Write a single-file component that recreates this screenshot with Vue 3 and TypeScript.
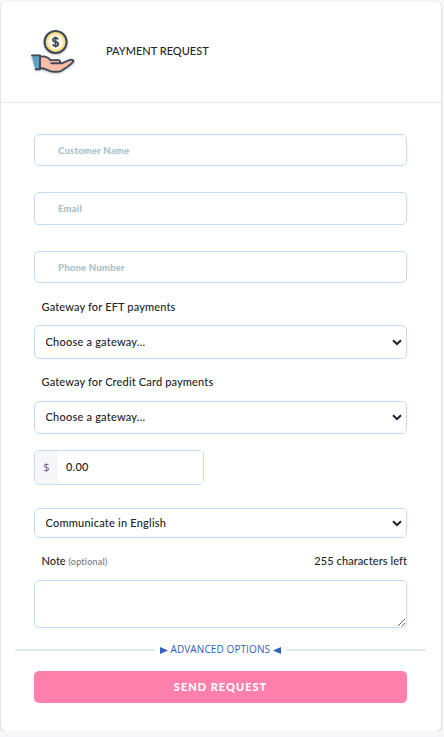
<script setup lang="ts">
import { computed, ref } from 'vue'

const NOTE_LIMIT = 255

const customer = ref('')
const email = ref('')
const phone = ref('')
const eftGateway = ref('')
const cardGateway = ref('')
const amount = ref('0.00')
const language = ref('en')
const note = ref('')

const charactersLeft = computed<number>(() => NOTE_LIMIT - note.value.length)
</script>

<template>
  <main class="card">
    <header class="head">
      <svg class="logo" viewBox="0 0 50 50" width="50" height="50" fill="none">
        <circle cx="27.6" cy="15" r="11" fill="#fbe08a" stroke="#3f4a59" stroke-width="2.1" />
        <circle cx="27.6" cy="15" r="7.5" fill="#fff8e6" />
        <path d="M30.2 12.4c-.4-1-1.4-1.5-2.6-1.5-1.5 0-2.6.7-2.6 2 0 2.8 5.3 1.3 5.3 4.1 0 1.3-1.2 2.1-2.7 2.1-1.4 0-2.5-.6-2.8-1.8M27.6 9.6v10.8" stroke="#3f4a59" stroke-width="1.7" />
        <path d="M4 28.6H12v13.6H7.8C5.7 38.5 4.6 33 4 28.6z" fill="#5f9fc4" />
        <path d="M12 29.8c4-1.2 7.5 0 10.5 3.3h8c1.8 0 2.5 2.8.3 3.2h3l7.5-3.1c2.7-1 5.2.2 3.8 1.7-2.9 3.1-7.6 6.4-12.1 9.1-2.5 1.2-8.5 1-11.5-.2-3-1.2-6-2.8-9.5-2.8z" fill="#f9bda8" />
        <path d="M4 28.4h8v13.8H7.7M12 29.8c4-1.2 7.5 0 10.5 3.3h8c1.8 0 2.5 3.2.3 3.2h-7.5M30.8 36.3h3l7.5-3.1c2.7-1 5.2.2 3.8 1.7-2.9 3.1-7.6 6.4-12.1 9.1-2.5 1.2-8.5 1-11.5-.2-3-1.2-6-2.8-9.5-2.8" stroke="#3f4a59" stroke-width="1.9" stroke-linejoin="round" stroke-linecap="round" />
      </svg>
      <h1 class="title">PAYMENT REQUEST</h1>
    </header>

    <form class="form" @submit.prevent>
      <input v-model="customer" class="control text customer" placeholder="Customer Name" />
      <input v-model="email" class="control text email" placeholder="Email" />
      <input v-model="phone" class="control text phone" placeholder="Phone Number" />

      <label class="label" for="eft">Gateway for EFT payments</label>
      <select id="eft" v-model="eftGateway" class="control select eft">
        <option value="">Choose a gateway...</option>
      </select>

      <label class="label second" for="credit">Gateway for Credit Card payments</label>
      <select id="credit" v-model="cardGateway" class="control select credit">
        <option value="">Choose a gateway...</option>
      </select>

      <div class="control amount">
        <span class="currency">$</span>
        <input v-model="amount" class="amount-input" />
      </div>

      <select v-model="language" class="control select language">
        <option value="en">Communicate in English</option>
      </select>

      <div class="note-row">
        <label for="note">Note <small class="optional">(optional)</small></label>
        <span class="counter">{{ charactersLeft }} characters left</span>
      </div>
      <textarea id="note" v-model="note" class="control note" :maxlength="NOTE_LIMIT"></textarea>
    </form>

    <div class="advanced">
      <span class="rule"></span>
      <a class="advanced-link">
        <svg width="8" height="7" viewBox="0 0 8 7"><path d="M0 0l8 3.5-8 3.5z" fill="currentColor" /></svg>
        <span class="advanced-text">ADVANCED OPTIONS</span>
        <svg width="8" height="7" viewBox="0 0 8 7"><path d="M8 0L0 3.5l8 3.5z" fill="currentColor" /></svg>
      </a>
      <span class="rule"></span>
    </div>

    <button class="send" type="button">SEND REQUEST</button>
  </main>
</template>

<style>
body {
  background: #f7f7f9;
}
</style>

<style scoped>
* {
  box-sizing: border-box;
}

.card {
  width: 440px;
  height: 729px;
  margin: 2px 0 0 1px;
  display: flow-root;
  background: #fff;
  border-radius: 5px;
  box-shadow: 0 1px 3px rgba(0, 0, 0, 0.2);
  font: 500 11px/16px Lato, 'Liberation Sans', sans-serif;
  color: #212529;
}

.head {
  height: 101px;
  display: flex;
  align-items: center;
  gap: 28px;
  padding-left: 27px;
  border-bottom: 1px solid #e9e9eb;
}

.logo {
  filter: drop-shadow(0 1px 1px rgba(0, 0, 0, 0.25));
}

.title {
  margin: 0 0 2px;
  font-size: 11px;
  font-weight: 500;
  line-height: 16px;
}

.form {
  display: flex;
  flex-direction: column;
  padding: 31px 34px 0 33px;
}

.control {
  display: block;
  width: 100%;
  margin: 0;
  border: 1px solid #c3dbf8;
  border-radius: 5px;
  background: #fff;
  font: inherit;
  color: inherit;
  outline: none;
}

.text {
  height: 32px;
  padding: 0 23px 2px;
}

.text::placeholder {
  color: #a9bfcc;
  font-size: 9.5px;
  font-weight: 900;
  letter-spacing: 0.2px;
  opacity: 1;
}

.email {
  height: 33px;
  margin-top: 26px;
}

.phone {
  margin-top: 26px;
}

.label {
  margin: 16px 0 10px 7.5px;
  letter-spacing: 0.15px;
}

.second {
  margin-top: 15px;
}

.select {
  appearance: none;
  padding: 0 24px 1px 10.5px;
  letter-spacing: 0.22px;
  background: #fff url("data:image/svg+xml,%3Csvg xmlns='http://www.w3.org/2000/svg' width='10' height='7' viewBox='0 0 10 7'%3E%3Cpath d='M1 1.2l4 3.8 4-3.800' fill='none' stroke='%23212529' stroke-width='2'/%3E%3C/svg%3E") no-repeat right 4px center;
}

.eft {
  height: 34px;
}

.credit {
  height: 33px;
  margin-top: 1px;
}

.amount {
  width: 170px;
  height: 35px;
  margin-top: 16px;
  display: flex;
  overflow: hidden;
}

.currency {
  width: 23px;
  padding-bottom: 2px;
  font-family: 'Open Sans', sans-serif;
  font-weight: 400;
  line-height: 31px;
  text-align: center;
  color: #5c6170;
  background: #f7f7fa;
}

.amount-input {
  flex: 1;
  min-width: 0;
  padding: 0 8px 2px;
  border: 0;
  font: inherit;
  letter-spacing: 0.2px;
  color: inherit;
  outline: none;
}

.language {
  height: 30px;
  margin-top: 23px;
}

.note-row {
  display: flex;
  justify-content: space-between;
  margin: 15px 0 10px 7.5px;
}

.counter {
  letter-spacing: 0.08px;
}

.optional {
  font-size: 9px;
  color: #74777c;
  letter-spacing: 0.2px;
}

.note {
  height: 48px;
  padding: 6px;
  resize: both;
}

.advanced {
  display: flex;
  align-items: center;
  gap: 5px;
  height: 16px;
  margin: 14px 15px 0 14px;
}

.rule {
  flex: 1;
  height: 2px;
  background: #dfeaf2;
}

.advanced-link {
  display: flex;
  align-items: center;
  gap: 2px;
  color: #2f62bd;
}

.advanced-text {
  width: 101px;
  padding: 0 0 1px 0.5px;
  font-family: 'Open Sans', sans-serif;
  font-size: 10px;
  font-weight: 400;
  line-height: 15px;
  letter-spacing: 0.1px;
  white-space: nowrap;
}

.send {
  display: block;
  width: 373px;
  height: 32px;
  margin: 13px 0 0 33px;
  padding: 0 0 1px;
  border: 0;
  border-radius: 5px;
  background: #ff80ab;
  color: #fff;
  font: 900 11px/30px Lato, 'Liberation Sans', sans-serif;
  letter-spacing: 1px;
}
</style>
